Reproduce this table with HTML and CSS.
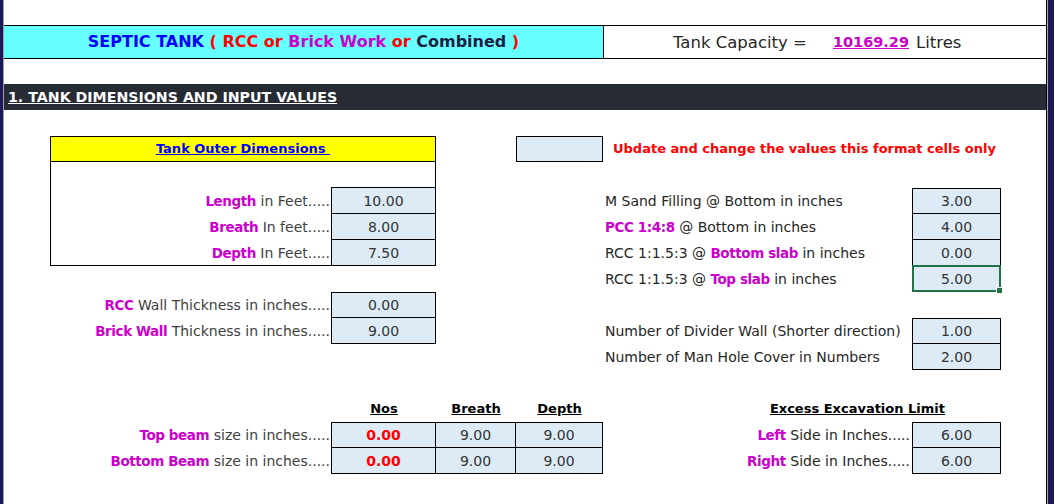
FILE: index.html
```html
<!DOCTYPE html>
<html>
<head>
<meta charset="utf-8">
<link rel="stylesheet" href="styles.css">
</head>
<body>
<div class="frame">
  <div class="edge-left"></div>
  <main class="sheet">
    <div class="spacer-top"></div>
    <div class="title-row">
      <div class="title-cell"><span class="blue">SEPTIC TANK</span> <span class="red">( RCC or</span> <span class="mag">Brick Work</span> <span class="red">or</span> <span class="navy">Combined</span> <span class="red">)</span></div>
      <div class="cap-cell">
        <span>Tank Capacity =</span><span class="cap-val">10169.29</span><span>Litres</span>
      </div>
    </div>
    <div class="spacer-mid"></div>
    <div class="section-bar"><span>1. TANK DIMENSIONS AND INPUT VALUES</span></div>

    <div class="grid">
      <!-- outer dimensions box -->
      <div class="dim-box"></div>
      <div class="dim-head"><span>Tank Outer Dimensions&nbsp;</span></div>

      <div class="lbl c2 r4"><b>Length</b> in Feet.....</div>
      <div class="cell c3 r4">10.00</div>
      <div class="lbl c2 r5"><b>Breath</b> In feet.....</div>
      <div class="cell c3 r5">8.00</div>
      <div class="lbl c2 r6"><b>Depth</b> In Feet.....</div>
      <div class="cell c3 r6">7.50</div>

      <div class="lbl c2 r8"><b>RCC</b> Wall Thickness in inches.....</div>
      <div class="cell c3 r8 first">0.00</div>
      <div class="lbl c2 r9"><b>Brick Wall</b> Thickness in inches.....</div>
      <div class="cell c3 r9">9.00</div>

      <!-- legend -->
      <div class="cell c5 r2 first legend"></div>
      <div class="note c6 r2">Ubdate and change the values this format cells only</div>

      <div class="rlbl c6 r4">M Sand Filling @ Bottom in inches</div>
      <div class="cell c7 r4 first">3.00</div>
      <div class="rlbl c6 r5"><b>PCC 1:4:8</b> @ Bottom in inches</div>
      <div class="cell c7 r5">4.00</div>
      <div class="rlbl c6 r6">RCC 1:1.5:3 @ <b>Bottom slab</b> in inches</div>
      <div class="cell c7 r6">0.00</div>
      <div class="rlbl c6 r7">RCC 1:1.5:3 @ <b>Top slab</b> in inches</div>
      <div class="cell c7 r7 selected">5.00<span class="handle"></span></div>

      <div class="rlbl c6 r9">Number of Divider Wall (Shorter direction)</div>
      <div class="cell c7 r9 first">1.00</div>
      <div class="rlbl c6 r10">Number of Man Hole Cover in Numbers</div>
      <div class="cell c7 r10">2.00</div>

      <!-- beams -->
      <div class="hdr c3 r12"><span>Nos</span></div>
      <div class="hdr c4 r12"><span>Breath</span></div>
      <div class="hdr c5 r12"><span>Depth</span></div>

      <div class="lbl c2 r13"><b>Top beam</b> size in inches.....</div>
      <div class="cell c3 r13 first nos">0.00</div>
      <div class="cell c4 r13 first">9.00</div>
      <div class="cell c5 r13 first">9.00</div>
      <div class="lbl c2 r14"><b>Bottom Beam</b> size in inches.....</div>
      <div class="cell c3 r14 nos">0.00</div>
      <div class="cell c4 r14">9.00</div>
      <div class="cell c5 r14">9.00</div>

      <!-- excavation -->
      <div class="hdr exc r12"><span>Excess Excavation Limit</span></div>
      <div class="lbl c6 r13 exl"><b>Left</b> Side in Inches.....</div>
      <div class="cell c7 r13 first">6.00</div>
      <div class="lbl c6 r14 exl"><b>Right</b> Side in Inches.....</div>
      <div class="cell c7 r14">6.00</div>
    </div>
  </main>
  <div class="edge-right"></div>
</div>
</body>
</html>
```

FILE: styles.css
```css
html, body {
  margin: 0;
  padding: 0;
  background: #fff;
}
body {
  font-family: "DejaVu Sans", "Liberation Sans", sans-serif;
  font-size: 14px;
  color: #333;
}
.frame {
  display: flex;
  width: 1055px;
  height: 504px;
  overflow: hidden;
}
.edge-left {
  width: 3px;
  background: #1b1a55;
  border-right: 1px solid #9a9ab0;
}
.edge-right {
  width: 7px;
  background: #1b1a55;
  border-left: 1px solid #000;
  box-shadow: inset 1px 0 0 #aaa;
}
.sheet {
  width: 1042px;
  display: flex;
  flex-direction: column;
}
.spacer-top { height: 25px; }
.title-row {
  display: flex;
  height: 32px;
  border-top: 1px solid #000;
  border-bottom: 1px solid #000;
}
.title-cell {
  width: 599px;
  background: #66ffff;
  border-right: 1px solid #000;
  text-align: center;
  line-height: 32px;
  font-weight: bold;
  font-size: 16px;
  white-space: pre;
}
.blue { color: #0000ff; }
.red { color: #ff0000; }
.mag { color: #cc00cc; }
.navy { color: #1f1f45; }
.cap-cell {
  flex: 1;
  display: flex;
  align-items: center;
  padding-left: 69px;
  font-size: 16.5px;
  color: #262626;
}
.cap-val {
  color: #cc00cc;
  font-weight: bold;
  font-size: 14.5px;
  text-decoration: underline;
  margin-left: 26px;
  margin-right: 7px;
}
.spacer-mid { height: 25px; }
.section-bar {
  height: 26px;
  background: #262b34;
  color: #fff;
  font-weight: bold;
  font-size: 14.2px;
  line-height: 26px;
  padding-left: 4px;
}
.section-bar span { text-decoration: underline; }

.grid {
  display: grid;
  grid-template-columns: 46px 282px 104px 80px 87px 310px 88px 45px;
  grid-template-rows: repeat(15, 26px);
}
.c2 { grid-column: 2; }
.c3 { grid-column: 3; }
.c4 { grid-column: 4; }
.c5 { grid-column: 5; }
.c6 { grid-column: 6; }
.c7 { grid-column: 7; }
.r2 { grid-row: 2; }
.r4 { grid-row: 4; }
.r5 { grid-row: 5; }
.r6 { grid-row: 6; }
.r7 { grid-row: 7; }
.r8 { grid-row: 8; }
.r9 { grid-row: 9; }
.r10 { grid-row: 10; }
.r12 { grid-row: 12; }
.r13 { grid-row: 13; }
.r14 { grid-row: 14; }

.dim-box {
  grid-column: 2 / 4;
  grid-row: 2 / 7;
  border: 1px solid #000;
}
.dim-head {
  grid-column: 2 / 4;
  grid-row: 2;
  background: #ffff00;
  border: 1px solid #000;
  text-align: center;
  line-height: 24px;
  font-weight: bold;
  color: #0000ff;
  font-size: 13px;
}
.dim-head span { text-decoration: underline; }

.cell {
  background: #ddebf7;
  border: 1px solid #000;
  margin: -1px 0 0 -1px;
  display: flex;
  align-items: center;
  justify-content: center;
  font-size: 14px;
  color: #333;
  position: relative;
}
.cell.first { margin-top: 0; }
.cell.legend { margin-left: 0; }
.cell.nos { color: #ff0000; font-weight: bold; }
.cell.selected {
  border: 2px solid #217346;
  margin: -1px 0 0 -1px;
}
.handle {
  position: absolute;
  right: -4px;
  bottom: -4px;
  width: 5px;
  height: 5px;
  background: #217346;
  border: 1px solid #fff;
}

.lbl {
  line-height: 26px;
  text-align: right;
  padding-right: 2px;
  white-space: nowrap;
  color: #404040;
  font-size: 14px;
}
.lbl.exl {
  padding-right: 3px;
  color: #262626;
}
.lbl b, .rlbl b {
  color: #cc00cc;
  font-size: 13.5px;
  letter-spacing: -0.4px;
}
.rlbl {
  line-height: 26px;
  padding-left: 2px;
  white-space: nowrap;
  color: #262626;
  font-size: 14px;
}
.note {
  grid-column: 6 / 9;
  line-height: 26px;
  padding-left: 10px;
  color: #ff0000;
  font-weight: bold;
  font-size: 13px;
  white-space: nowrap;
}
.hdr {
  line-height: 26px;
  text-align: center;
  font-weight: bold;
  color: #000;
  font-size: 13px;
}
.hdr span { text-decoration: underline; }
.hdr.exc {
  grid-column: 6 / 8;
  text-align: right;
  padding-right: 56px;
}
```
